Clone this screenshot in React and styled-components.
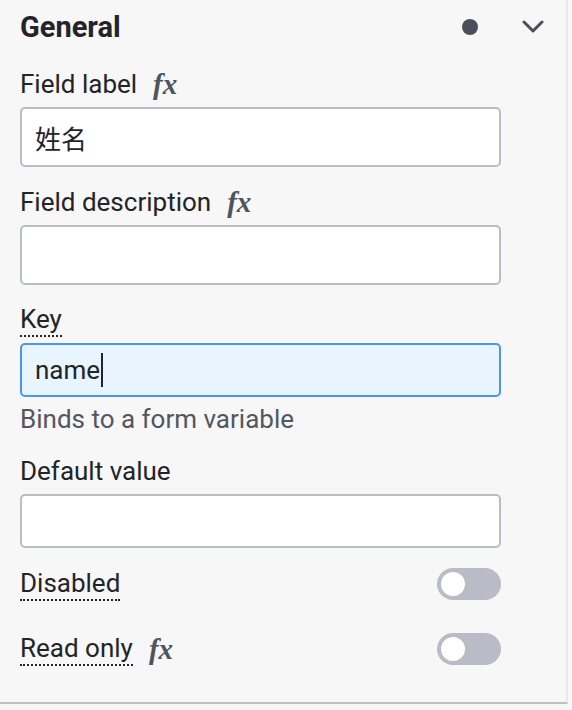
import React from "react";
import styled, { createGlobalStyle } from "styled-components";

const GlobalStyle = createGlobalStyle`
  html, body {
    margin: 0;
    padding: 0;
    background: #f7f7f7;
  }
  body {
    font-family: Roboto, "Noto Sans", "Noto Sans CJK SC", sans-serif;
    color: #22242a;
  }
`;

const Panel = styled.div`
  box-sizing: border-box;
  width: 568px;
  height: 704px;
  padding: 9px 0 0 20px;
  border-right: 2px solid #e8e8e8;
  border-bottom: 2px solid #bcbec6;
  background: #f7f7f7;
`;

const Header = styled.div`
  display: flex;
  align-items: center;
  height: 36px;
  padding-right: 22px;
`;

const Title = styled.h2`
  flex: 1;
  margin: 0;
  font-size: 29px;
  line-height: 36px;
  font-weight: 700;
  color: #22242a;
`;

const Dot = styled.span`
  width: 16px;
  height: 16px;
  border-radius: 50%;
  background: #4b4f5b;
  margin-right: 44px;
`;

const Chevron = styled.svg`
  width: 22px;
  height: 14px;
  color: #4b4f5b;
`;

const Form = styled.div`
  width: 481px;
  margin-top: 22px;
  display: flex;
  flex-direction: column;
`;

const Field = styled.div`
  display: flex;
  flex-direction: column;
  margin-top: ${({ $first }) => ($first ? "0" : "18px")};
`;

const LabelRow = styled.div`
  display: flex;
  align-items: center;
  gap: 16px;
  margin-bottom: 6px;
`;

const Label = styled.span`
  font-size: 26px;
  color: #22242a;
  border-bottom: ${({ $dotted }) => ($dotted ? "2px dotted #22242a" : "none")};
  line-height: ${({ $dotted }) => ($dotted ? "32px" : "34px")};
`;

const Fx = styled.span`
  font-family: "Liberation Serif", "DejaVu Serif", serif;
  font-style: italic;
  font-weight: 700;
  font-size: 29px;
  line-height: 34px;
  color: #4f535e;
`;

const InputBox = styled.div`
  box-sizing: border-box;
  height: ${({ $tall }) => ($tall ? "60px" : "54px")};
  padding: 0 13px;
  display: flex;
  align-items: center;
  border: 2px solid ${({ $focused }) => ($focused ? "#4a96ee" : "#babdc5")};
  border-radius: 5px;
  background: ${({ $focused }) => ($focused ? "#e8f4fe" : "#ffffff")};
  font-size: 26px;
  color: #22242a;
`;

const Caret = styled.span`
  display: inline-block;
  width: 2px;
  height: 34px;
  margin-left: 1px;
  background: #22242a;
`;

const Description = styled.div`
  margin-top: 5px;
  font-size: 26px;
  line-height: 34px;
  color: #535660;
`;

const ToggleRow = styled.div`
  display: flex;
  align-items: center;
  justify-content: space-between;
  margin-top: ${({ $gap }) => $gap}px;
  height: 32px;
`;

const ToggleLabel = styled.div`
  display: flex;
  align-items: center;
  gap: 16px;
`;

const Track = styled.span`
  box-sizing: border-box;
  width: 64px;
  height: 32px;
  padding: 0 4px;
  display: flex;
  align-items: center;
  border-radius: 16px;
  background: #b9bcc6;
`;

const Knob = styled.span`
  width: 24px;
  height: 24px;
  border-radius: 50%;
  background: #ffffff;
`;

const Toggle = () => (
  <Track>
    <Knob />
  </Track>
);

export default function App() {
  return (
    <>
      <GlobalStyle />
      <Panel>
        <Header>
          <Title>General</Title>
          <Dot />
          <Chevron viewBox="0 0 22 14" fill="none">
            <polyline
              points="2,2 11,11 20,2"
              stroke="currentColor"
              strokeWidth="3"
              strokeLinecap="round"
              strokeLinejoin="round"
            />
          </Chevron>
        </Header>
        <Form>
          <Field $first>
            <LabelRow>
              <Label>Field label</Label>
              <Fx>fx</Fx>
            </LabelRow>
            <InputBox $tall>姓名</InputBox>
          </Field>
          <Field>
            <LabelRow>
              <Label>Field description</Label>
              <Fx>fx</Fx>
            </LabelRow>
            <InputBox $tall />
          </Field>
          <Field>
            <LabelRow>
              <Label $dotted>Key</Label>
            </LabelRow>
            <InputBox $focused>
              name
              <Caret />
            </InputBox>
            <Description>Binds to a form variable</Description>
          </Field>
          <Field>
            <LabelRow>
              <Label>Default value</Label>
            </LabelRow>
            <InputBox />
          </Field>
          <ToggleRow $gap={20}>
            <ToggleLabel>
              <Label $dotted>Disabled</Label>
            </ToggleLabel>
            <Toggle />
          </ToggleRow>
          <ToggleRow $gap={33}>
            <ToggleLabel>
              <Label $dotted>Read only</Label>
              <Fx>fx</Fx>
            </ToggleLabel>
            <Toggle />
          </ToggleRow>
        </Form>
      </Panel>
    </>
  );
}
